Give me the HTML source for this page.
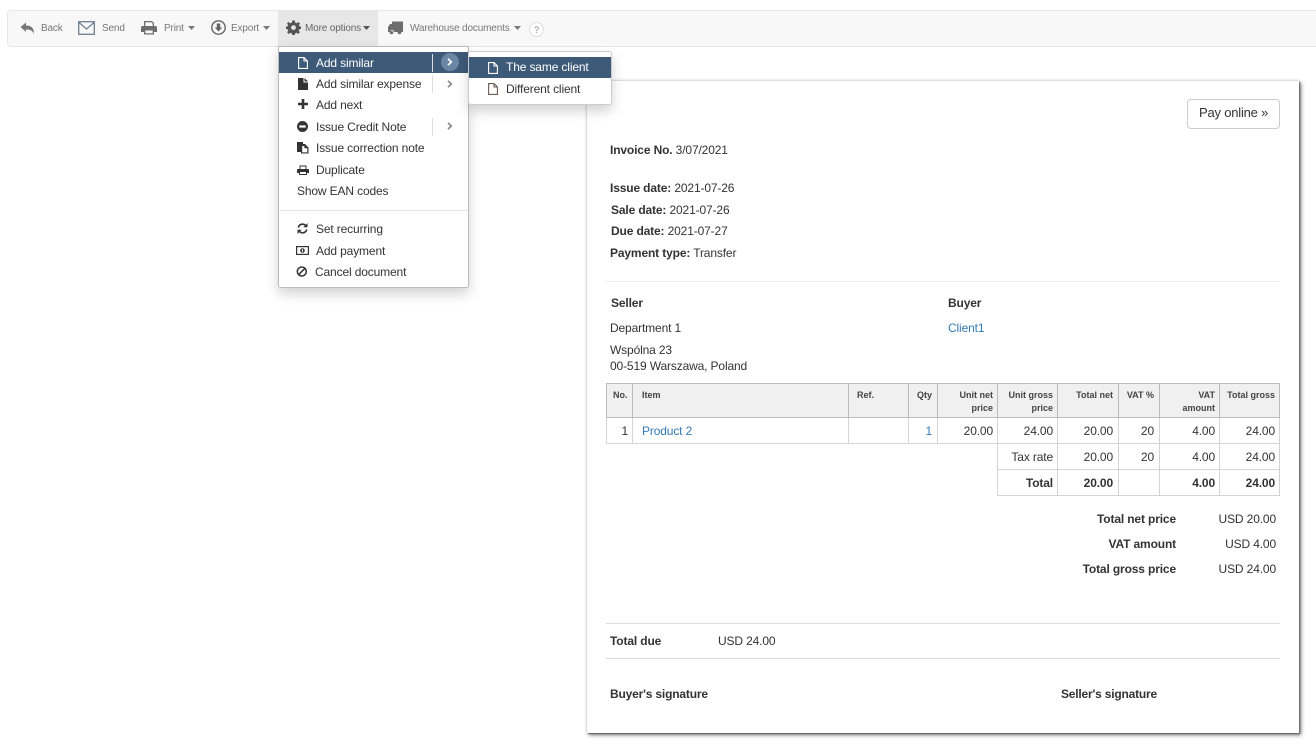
<!DOCTYPE html>
<html><head><meta charset="utf-8"><title>Invoice</title>
<style>
html,body{margin:0;padding:0;background:#fff}
#p{position:relative;width:1316px;height:746px;overflow:hidden;background:#fff;font-family:"Liberation Sans",Arial,sans-serif;font-size:12px;color:#333;letter-spacing:-.14px}
#p div,#p svg{position:absolute}
.t,.r{position:absolute;white-space:nowrap;line-height:14px}
.b{font-weight:bold}
.r{text-align:right}
.l{color:#337ab7}
.tb{font-size:10px;color:#777;letter-spacing:-.15px}
#p .th{font-size:9px;font-weight:bold;line-height:13px;color:#444;letter-spacing:0}
.m{color:#333}
.w{color:#fff}
.n{color:#333}
</style></head><body><div id="p">

<!-- toolbar -->
<div style="left:7px;top:10px;width:1320px;height:35px;background:#f8f8f8;border:1px solid #e7e7e7;border-radius:4px"></div>
<div style="left:278px;top:11px;width:100px;height:35px;background:#e7e7e7"></div>

<svg style="left:20px;top:21px" width="15" height="14" viewBox="0 0 15 14"><path d="M0.5 6 L6 1.5 V4.5 C11 4.5 14 6.5 14 13 C12.5 9.5 10.5 8.5 6 8.5 V11 Z" fill="#777"/></svg>
<span class="t tb" style="left:41px;top:22px">Back</span>
<svg style="left:78px;top:21px" width="17" height="14" viewBox="0 0 17 14"><rect x="0.7" y="0.7" width="15.6" height="12.6" fill="none" stroke="#6b7f92" stroke-width="1.3"/><path d="M1 1.5 L8.5 8 L16 1.5" fill="none" stroke="#6b7f92" stroke-width="1.2"/></svg>
<span class="t tb" style="left:102px;top:22px">Send</span>
<svg style="left:141px;top:20px" width="16" height="15" viewBox="0 0 16 15"><path d="M3 6 V1 H11 L13 3 V6 H11.7 V3.6 L10.4 2.2 H4.3 V6 Z M1.5 6 H14.5 Q16 6 16 7.5 V12 H13 V14.5 H3 V12 H0 V7.5 Q0 6 1.5 6 Z M4.3 10.5 V13.2 H11.7 V10.5 Z" fill="#6e6e6e" fill-rule="evenodd"/></svg>
<span class="t tb" style="left:164px;top:22px">Print</span>
<svg style="left:188px;top:26px" width="7" height="4"><path d="M0 0 H7 L3.5 4 Z" fill="#777"/></svg>
<svg style="left:211px;top:20px" width="15" height="15" viewBox="0 0 15 15"><circle cx="7.5" cy="7.5" r="6.7" fill="none" stroke="#666" stroke-width="1.4"/><path d="M5.8 3.5 H9.2 V7.5 H11.3 L7.5 11.5 L3.7 7.5 H5.8 Z" fill="#666"/></svg>
<span class="t tb" style="left:231px;top:22px">Export</span>
<svg style="left:263px;top:26px" width="7" height="4"><path d="M0 0 H7 L3.5 4 Z" fill="#777"/></svg>
<svg style="left:286px;top:20px" width="15" height="15" viewBox="0 0 15 15"><path d="M6.2 0.5 H8.8 L9.2 2.6 L10.7 3.2 L12.5 2 L14 3.6 L12.8 5.3 L13.4 6.3 L15 6.6 V9 L13.2 9.4 L12.7 10.6 L13.9 12.3 L12.2 14 L10.5 12.8 L9.2 13.3 L8.8 15 H6.2 L5.8 13.3 L4.5 12.8 L2.8 14 L1.1 12.3 L2.3 10.6 L1.8 9.4 L0 9 V6.6 L1.6 6.3 L2.2 5.3 L1 3.6 L2.5 2 L4.3 3.2 L5.8 2.6 Z M7.5 5.2 A2.4 2.4 0 1 0 7.5 10 A2.4 2.4 0 1 0 7.5 5.2 Z" fill="#555" fill-rule="evenodd"/></svg>
<span class="t tb" style="left:305px;top:22px;color:#666">More options</span>
<svg style="left:363px;top:26px" width="7" height="4"><path d="M0 0 H7 L3.5 4 Z" fill="#555"/></svg>
<svg style="left:387px;top:21px" width="16" height="14" viewBox="0 0 16 14"><path d="M5 0.5 H16 V11 H7 A2 2 0 0 0 3 11 H1 V6 L3 3 H5 Z" fill="#6e6e6e"/><circle cx="4.5" cy="11.5" r="1.8" fill="#6e6e6e"/><circle cx="12.5" cy="11.5" r="1.8" fill="#6e6e6e"/></svg>
<span class="t tb" style="left:410px;top:22px">Warehouse documents</span>
<svg style="left:514px;top:26px" width="7" height="4"><path d="M0 0 H7 L3.5 4 Z" fill="#777"/></svg>
<svg style="left:529px;top:22px" width="15" height="15"><circle cx="7.5" cy="7.5" r="7" fill="#fff" stroke="#ddd"/></svg>
<span class="t" style="left:534px;top:23px;font-size:9px;color:#888">?</span>

<!-- document -->
<div style="left:587px;top:81px;width:712px;height:652px;background:#fff;box-shadow:1px 1px 1px #666,2px 2px 4px #777,0 0 3px #ccc"></div>
<div style="left:1187px;top:99px;width:91px;height:28px;border:1px solid #ccc;border-radius:4px;background:#fff"></div>
<span class="t" style="left:1199px;top:106px;font-size:13px;letter-spacing:-.2px">Pay online »</span>

<span class="t" style="left:610px;top:143px"><b>Invoice No.</b> 3/07/2021</span>
<span class="t" style="left:610px;top:181px"><b>Issue date:</b> 2021-07-26</span>
<span class="t" style="left:611px;top:203px"><b>Sale date:</b> 2021-07-26</span>
<span class="t" style="left:611px;top:224px"><b>Due date:</b> 2021-07-27</span>
<span class="t" style="left:610px;top:246px"><b>Payment type:</b> Transfer</span>
<div style="left:606px;top:281px;width:674px;height:1px;background:#eee"></div>
<span class="t b" style="left:611px;top:296px">Seller</span>
<span class="t b" style="left:948px;top:296px">Buyer</span>
<span class="t" style="left:610px;top:321px">Department 1</span>
<span class="t l" style="left:948px;top:321px">Client1</span>
<span class="t" style="left:610px;top:343px">Wspólna 23</span>
<span class="t" style="left:610px;top:359px">00-519 Warszawa, Poland</span>

<!-- table -->
<div style="left:606px;top:383px;width:674px;height:35px;background:#f0f0f0"></div>
<svg style="left:0;top:0" width="1316" height="746" shape-rendering="crispEdges">
<g stroke="#d4d4d4" stroke-width="1">
<path d="M606.5 417V444M632.5 417V444M848.5 417V444M908.5 417V444M937.5 417V444M997.5 417V495M1057.5 417V495M1118.5 417V495M1159.5 417V495M1219.5 417V495M1279.5 417V495"/>
<path d="M606 443.5H1280M997 469.5H1280M997 495.5H1280"/>
</g>
<g stroke="#bbb" stroke-width="1">
<path d="M606 383.5H1280M606 417.5H1280"/>
<path d="M606.5 383V418M632.5 383V418M848.5 383V418M908.5 383V418M937.5 383V418M997.5 383V418M1057.5 383V418M1118.5 383V418M1159.5 383V418M1219.5 383V418M1279.5 383V418"/>
</g>
</svg>
<span class="t th" style="left:613px;top:389px">No.</span>
<span class="t th" style="left:642px;top:389px">Item</span>
<span class="t th" style="left:857px;top:389px">Ref.</span>
<span class="r th" style="right:384px;top:389px">Qty</span>
<span class="r th" style="right:323px;top:389px">Unit net<br>price</span>
<span class="r th" style="right:263px;top:389px">Unit gross<br>price</span>
<span class="r th" style="right:203px;top:389px">Total net</span>
<span class="r th" style="right:162px;top:389px">VAT %</span>
<span class="r th" style="right:101px;top:389px">VAT<br>amount</span>
<span class="r th" style="right:41px;top:389px">Total gross</span>

<span class="r" style="right:688px;top:424px">1</span>
<span class="t l" style="left:642px;top:424px">Product 2</span>
<span class="r l" style="right:384px;top:424px">1</span>
<span class="r" style="right:323px;top:424px">20.00</span>
<span class="r" style="right:263px;top:424px">24.00</span>
<span class="r" style="right:203px;top:424px">20.00</span>
<span class="r" style="right:162px;top:424px">20</span>
<span class="r" style="right:101px;top:424px">4.00</span>
<span class="r" style="right:41px;top:424px">24.00</span>

<span class="r" style="right:263px;top:450px">Tax rate</span>
<span class="r" style="right:203px;top:450px">20.00</span>
<span class="r" style="right:162px;top:450px">20</span>
<span class="r" style="right:101px;top:450px">4.00</span>
<span class="r" style="right:41px;top:450px">24.00</span>

<span class="r b" style="right:263px;top:476px">Total</span>
<span class="r b" style="right:203px;top:476px">20.00</span>
<span class="r b" style="right:101px;top:476px">4.00</span>
<span class="r b" style="right:41px;top:476px">24.00</span>

<span class="r b" style="right:140px;top:512px">Total net price</span>
<span class="r" style="right:40px;top:512px">USD 20.00</span>
<span class="r b" style="right:140px;top:537px">VAT amount</span>
<span class="r" style="right:40px;top:537px">USD 4.00</span>
<span class="r b" style="right:140px;top:562px">Total gross price</span>
<span class="r" style="right:40px;top:562px">USD 24.00</span>

<div style="left:606px;top:623px;width:674px;height:1px;background:#ddd"></div>
<span class="t b" style="left:610px;top:634px">Total due</span>
<span class="t" style="left:718px;top:634px">USD 24.00</span>
<div style="left:606px;top:658px;width:674px;height:1px;background:#ddd"></div>
<span class="t b" style="left:610px;top:687px;letter-spacing:-.18px">Buyer's signature</span>
<span class="t b" style="left:1061px;top:687px;letter-spacing:-.2px">Seller's signature</span>

<!-- main dropdown -->
<div style="left:278px;top:46px;width:189px;height:240px;background:#fff;border:1px solid #bbb;border-radius:0 0 3px 3px;box-shadow:0 6px 12px rgba(0,0,0,.175)"></div>
<div style="left:279px;top:52px;width:189px;height:21px;background:#3d5a78"></div>
<div style="left:432px;top:54px;width:1px;height:18px;background:#ddd"></div>
<div style="left:432px;top:75px;width:1px;height:18px;background:#ddd"></div>
<div style="left:432px;top:118px;width:1px;height:18px;background:#ddd"></div>
<div style="left:441px;top:53px;width:18px;height:18px;border-radius:50%;background:#6a86a3"></div>
<svg style="left:447px;top:58px" width="6" height="8" viewBox="0 0 6 8"><path d="M1 0.8 L4.3 4 L1 7.2" fill="none" stroke="#fff" stroke-width="1.7"/></svg>
<svg style="left:447px;top:80px" width="6" height="8" viewBox="0 0 6 8"><path d="M1 0.8 L4.3 4 L1 7.2" fill="none" stroke="#888" stroke-width="1.7"/></svg>
<svg style="left:447px;top:122px" width="6" height="8" viewBox="0 0 6 8"><path d="M1 0.8 L4.3 4 L1 7.2" fill="none" stroke="#888" stroke-width="1.7"/></svg>

<svg style="left:298px;top:57px" width="10" height="12" viewBox="0 0 10 12"><path d="M0.6 0.6 H6 L9.4 4 V11.4 H0.6 Z M6 0.6 V4 H9.4" fill="none" stroke="#fff" stroke-width="1.1"/></svg>
<span class="t w" style="left:316px;top:56px">Add similar</span>
<svg style="left:298px;top:78px" width="10" height="12" viewBox="0 0 10 12"><path d="M0 0 H5.5 V4.5 H10 V12 H0 Z M6.5 0 L10 3.5 H6.5 Z" fill="#333"/></svg>
<span class="t m" style="left:316px;top:77px">Add similar expense</span>
<svg style="left:298px;top:99px" width="10" height="10" viewBox="0 0 10 10"><path d="M3.7 0 H6.3 V3.7 H10 V6.3 H6.3 V10 H3.7 V6.3 H0 V3.7 H3.7 Z" fill="#333"/></svg>
<span class="t m" style="left:316px;top:98px">Add next</span>
<svg style="left:297px;top:121px" width="11" height="11" viewBox="0 0 11 11"><circle cx="5.5" cy="5.5" r="5.5" fill="#333"/><rect x="2.3" y="4.4" width="6.4" height="2.2" fill="#fff"/></svg>
<span class="t m" style="left:316px;top:120px">Issue Credit Note</span>
<svg style="left:297px;top:142px" width="12" height="12" viewBox="0 0 12 12"><path d="M0 0 H6 V2 H4 V10 H0 Z" fill="#333"/><path d="M4 2 H8 L11.5 5.5 V11.5 H4 Z" fill="#333"/><path d="M5.2 4 H7.4 V6.3 H10.3 V10.4 H5.2 Z" fill="#fff"/></svg>
<span class="t m" style="left:316px;top:141px">Issue correction note</span>
<svg style="left:297px;top:165px" width="12" height="10" viewBox="0 0 12 10"><path d="M2.5 4 V0.5 H9.5 V4 H8.5 V1.5 H3.5 V4 Z M1 4 H11 Q12 4 12 5 V8 H10 V10 H2 V8 H0 V5 Q0 4 1 4 Z M3 7 V9 H9 V7 Z" fill="#333" fill-rule="evenodd"/></svg>
<span class="t m" style="left:316px;top:163px">Duplicate</span>
<span class="t m" style="left:297px;top:184px">Show EAN codes</span>
<div style="left:279px;top:210px;width:189px;height:1px;background:#e5e5e5"></div>
<svg style="left:297px;top:223px" width="11" height="11" viewBox="0 0 11 11"><path d="M1.3 4.6 A4.3 4.3 0 0 1 8.7 2.6 M9.7 6.4 A4.3 4.3 0 0 1 2.3 8.4" fill="none" stroke="#333" stroke-width="1.6"/><path d="M10.5 0 V4.2 H6.3 Z M0.5 11 V6.8 H4.7 Z" fill="#333"/></svg>
<span class="t m" style="left:316px;top:222px">Set recurring</span>
<svg style="left:296px;top:246px" width="13" height="9" viewBox="0 0 13 9"><rect x="0.6" y="0.6" width="11.8" height="7.8" fill="none" stroke="#333" stroke-width="1.2"/><circle cx="6.5" cy="4.5" r="2.3" fill="#333"/><rect x="6" y="3.2" width="1" height="2.6" fill="#fff"/></svg>
<span class="t m" style="left:316px;top:244px">Add payment</span>
<svg style="left:296px;top:266px" width="12" height="11" viewBox="0 0 12 11"><circle cx="5.8" cy="5.5" r="4.5" fill="none" stroke="#333" stroke-width="1.5"/><path d="M2.6 8.7 L9 2.3" stroke="#333" stroke-width="1.5"/></svg>
<span class="t m" style="left:315px;top:265px">Cancel document</span>

<!-- submenu -->
<div style="left:468px;top:51px;width:142px;height:52px;background:#fff;border:1px solid #ccc;border-radius:3px;box-shadow:0 6px 12px rgba(0,0,0,.175)"></div>
<div style="left:469px;top:57px;width:142px;height:21px;background:#3d5a78"></div>
<svg style="left:488px;top:62px" width="10" height="12" viewBox="0 0 10 12"><path d="M0.6 0.6 H6 L9.4 4 V11.4 H0.6 Z M6 0.6 V4 H9.4" fill="none" stroke="#fff" stroke-width="1.1"/></svg>
<span class="t w" style="left:506px;top:60px">The same client</span>
<svg style="left:488px;top:83px" width="10" height="12" viewBox="0 0 10 12"><path d="M0.6 0.6 H6 L9.4 4 V11.4 H0.6 Z M6 0.6 V4 H9.4" fill="none" stroke="#6b5a55" stroke-width="1.1"/></svg>
<span class="t m" style="left:506px;top:82px">Different client</span>
</div></body></html>
